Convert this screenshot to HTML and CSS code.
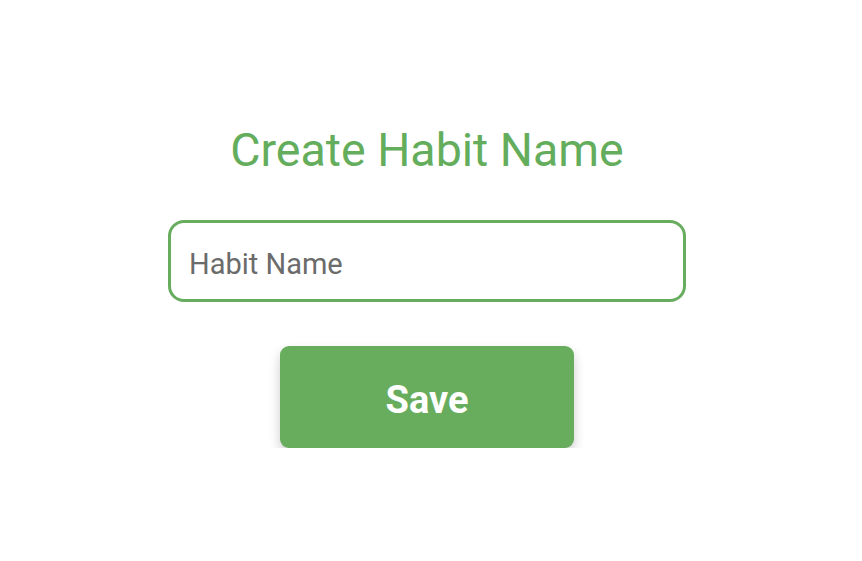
FILE: index.html
```html
<!DOCTYPE html>
<html lang="en">
<head>
<meta charset="utf-8">
<title>Create Habit Name</title>
<link rel="stylesheet" href="styles.css">
</head>
<body>
<main class="page">
  <h1 class="title">Create Habit Name</h1>
  <input class="name-input" type="text" placeholder="Habit Name">
  <button class="save-btn" type="button">Save</button>
</main>
</body>
</html>
```
FILE: styles.css
```css
html, body {
  margin: 0;
  padding: 0;
  background: #ffffff;
}
body {
  font-family: Roboto, "Liberation Sans", sans-serif;
}
.page {
  width: 854px;
  display: flex;
  flex-direction: column;
  align-items: center;
  padding-top: 123px;
}
.title {
  margin: 0;
  font-size: 46.5px;
  font-weight: 400;
  line-height: 54px;
  color: #64ad5c;
}
.name-input {
  box-sizing: border-box;
  margin-top: 43px;
  width: 518px;
  height: 82px;
  border: 3.5px solid #68ad5f;
  border-radius: 16px;
  padding: 6px 17px 0 18px;
  font-family: Roboto, "Liberation Sans", sans-serif;
  font-size: 29px;
  color: #444;
  background: #fff;
  outline: none;
}
.name-input::placeholder {
  color: #6b6b6b;
  opacity: 1;
}
.save-btn {
  box-sizing: border-box;
  margin-top: 44px;
  width: 294px;
  height: 102px;
  border: none;
  border-radius: 9px;
  background: #67ad5d;
  color: #ffffff;
  font-family: Roboto, "Liberation Sans", sans-serif;
  font-size: 38px;
  font-weight: 700;
  padding: 5px 0 0 0;
  box-shadow: 0 6px 12px rgba(0, 0, 0, 0.2);
}
```
